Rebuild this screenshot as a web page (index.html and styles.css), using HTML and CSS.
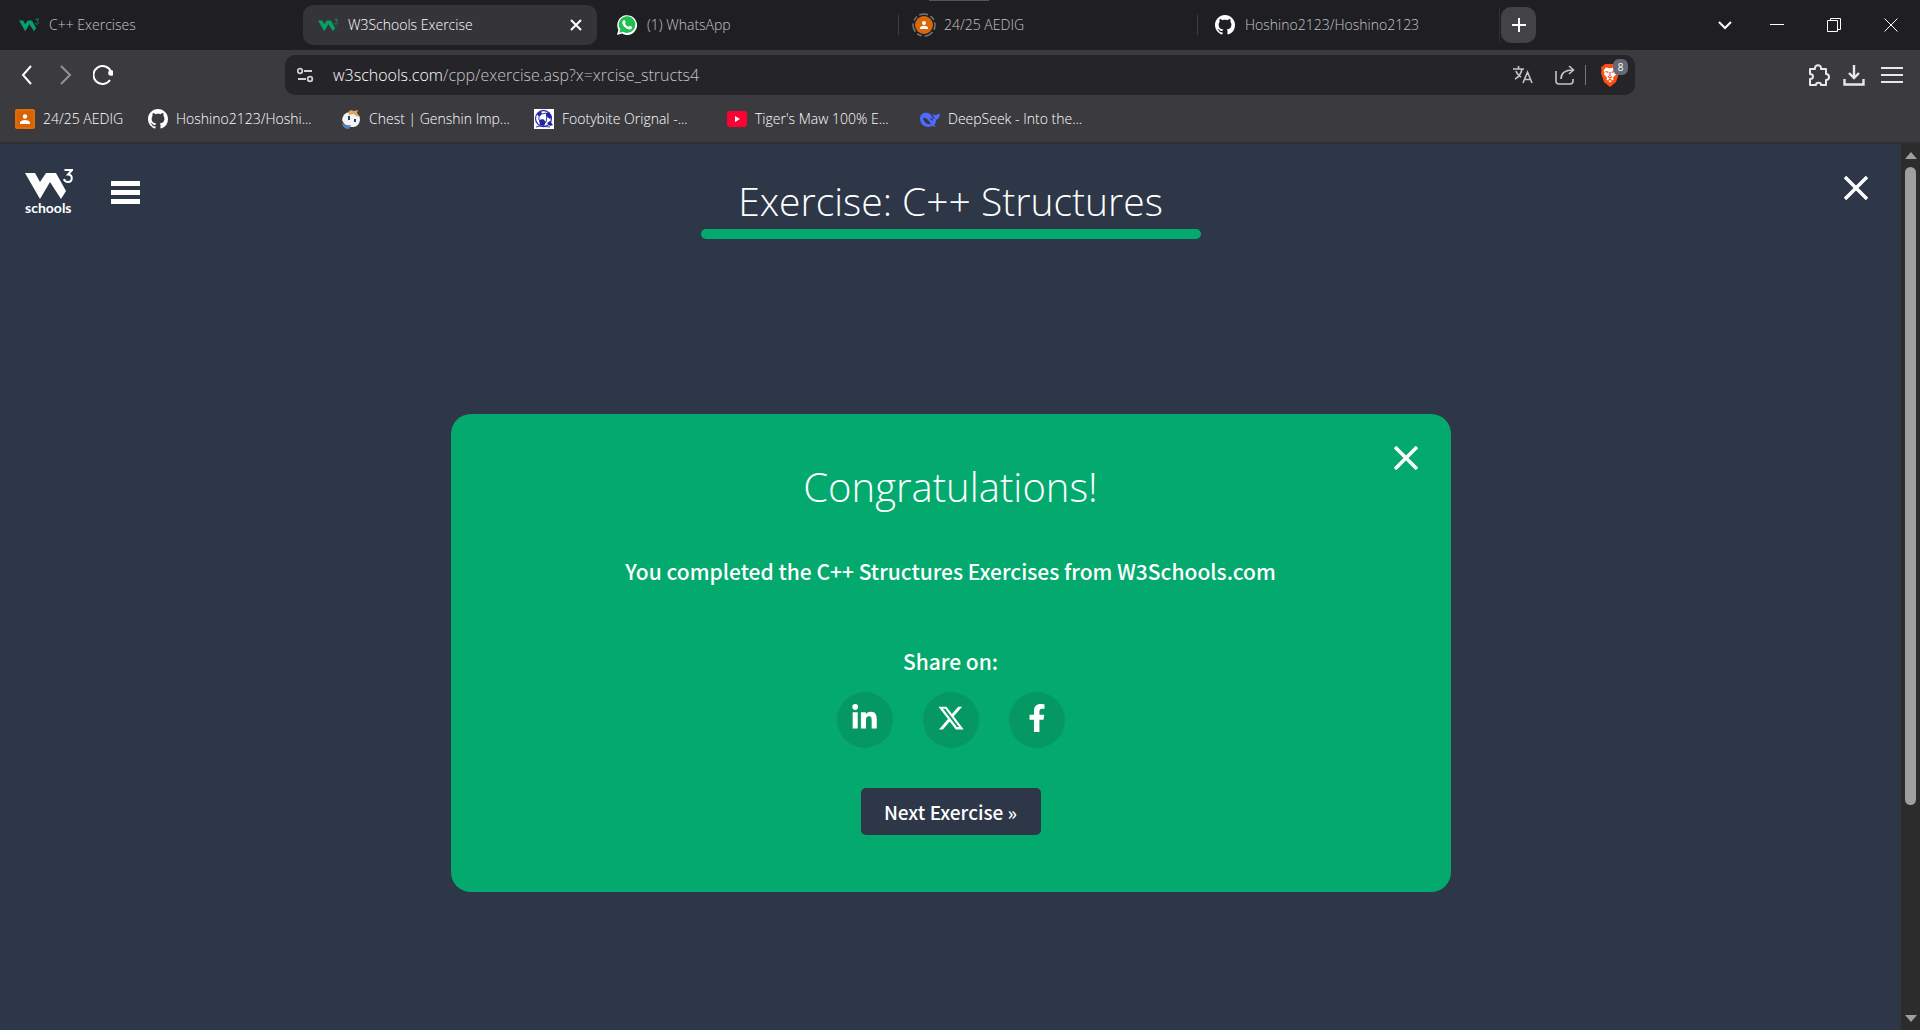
FILE: index.html
```html
<!DOCTYPE html>
<html lang="en">
<head>
<meta charset="utf-8">
<title>W3Schools Exercise</title>
<link rel="stylesheet" href="styles.css">
</head>
<body>
<svg class="sprite" aria-hidden="true">
  <symbol id="w3" viewBox="0 0 48 30"><path d="M0 4h10l5 9 6-9h10l10 18-5 8-11-17-10 17z"/><path class="three" d="M39.500 1h7.500l-4 4.500c5 0 5 7.500 0 7.500-2 0-3.500-1-4-3"/></symbol>
  <symbol id="github" viewBox="0 0 16 16"><path fill="#fff" d="M8 0C3.580 0 0 3.580 0 8c0 3.540 2.290 6.530 5.470 7.590.4.070.55-.17.55-.38 0-.19-.01-.82-.01-1.490-2.010.37-2.530-.49-2.690-.94-.09-.23-.48-.94-.82-1.130-.28-.15-.68-.52-.01-.53.63-.01 1.080.58 1.230.82.72 1.210 1.870.87 2.330.66.070-.52.28-.87.51-1.070-1.780-.2-3.640-.89-3.640-3.950 0-.87.31-1.590.82-2.150-.08-.2-.36-1.020.08-2.120 0 0 .67-.21 2.200.82.64-.18 1.320-.27 2-.27s1.360.09 2 .27c1.530-1.040 2.200-.82 2.200-.82.44 1.100.16 1.920.08 2.120.51.56.82 1.270.82 2.150 0 3.070-1.870 3.750-3.650 3.950.29.25.54.73.54 1.480 0 1.070-.01 1.930-.01 2.200 0 .21.15.46.55.38A8.010 8.010 0 0 0 16 8c0-4.420-3.580-8-8-8z"/></symbol>
  <symbol id="classroom" viewBox="0 0 20 20"><rect width="20" height="20" rx="2" fill="#e06c0a"/><rect x="2" y="2" width="16" height="16" fill="#d96300"/><circle cx="10" cy="7.500" r="2.200" fill="#fff"/><path d="M5 15v-1.500c0-3.500 10-3.500 10 0V15z" fill="#fff"/></symbol>
  <symbol id="cross" viewBox="0 0 24 24"><path d="M1 1l22 22M23 1L1 23" fill="none" stroke="#fff" stroke-width="3.500"/></symbol>
</svg>

<div class="browser">
  <nav class="tabs" aria-label="Tabs">
    <a class="tab" href="#"><svg class="favicon green"><use href="#w3"/></svg><span>C++ Exercises</span></a>
    <div class="tab active"><a href="#"><svg class="favicon green"><use href="#w3"/></svg><span>W3Schools Exercise</span></a>
      <button class="tab-close" aria-label="Close tab"><svg width="12" height="12" viewBox="0 0 12 12"><path d="M1 1l10 10M11 1L1 11" stroke="#fff" stroke-width="2"/></svg></button></div>
    <a class="tab" href="#"><svg class="favicon" viewBox="0 0 20 20"><path d="M0 20l1.400-5.200A9.900 9.900 0 1 1 5 18.600z" fill="#fff"/><path d="M2.300 17.700l.9-3.400a8.300 8.300 0 1 1 2.700 2.500z" fill="#1fbf52"/><path d="M6.800 5.200c.6-.3 1 0 1.200.5l.6 1.500c.1.600-.8 1.100-.6 1.500.8 1.500 2 2.500 3.500 3.100.5.200 1-1.100 1.500-1l1.800.9c.4.300.3 2-.9 2.600-3 1.500-8.900-3.300-8.600-7 .1-.9.800-1.800 1.500-2.100z" fill="#fff"/></svg><span>(1) WhatsApp</span></a>
    <a class="tab split" href="#"><svg class="favicon ring" viewBox="0 0 24 24"><circle cx="12" cy="12" r="11" fill="none" stroke="#77777b" stroke-width="1.500" stroke-dasharray="5 2.500 9 3"/><circle cx="12" cy="12" r="9" fill="#da6806"/><circle cx="12" cy="10" r="2" fill="#fff"/><path d="M8 16v-1c0-3 8-3 8 0v1z" fill="#fff"/></svg><span>24/25 AEDIG</span></a>
    <a class="tab split" href="#"><svg class="favicon"><use href="#github"/></svg><span>Hoshino2123/Hoshino2123</span></a>
    <div class="new-tab-slot"><button class="new-tab" aria-label="New tab"><svg width="14" height="14" viewBox="0 0 14 14"><path d="M7 0v14M0 7h14" stroke="#fff" stroke-width="2"/></svg></button></div>
    <div class="window-buttons">
      <button aria-label="Search tabs"><svg viewBox="0 0 14 14"><path d="M1 4l6 6 6-6" stroke-width="2"/></svg></button>
      <button aria-label="Minimize"><svg viewBox="0 0 14 14"><path d="M0 6.500h14"/></svg></button>
      <button aria-label="Restore"><svg viewBox="0 0 14 14"><path d="M.5 2.500h10v11H.5zM3.500 2V.5h10v11H11"/></svg></button>
      <button aria-label="Close"><svg viewBox="0 0 14 14"><path d="M.5.5l13 13M13.500.5l-13 13"/></svg></button>
    </div>
  </nav>

  <div class="toolbar">
    <div class="nav-buttons">
      <button aria-label="Back"><svg viewBox="0 0 20 20"><path d="M14 1L6 10l8 9"/></svg></button>
      <button class="dim" aria-label="Forward"><svg viewBox="0 0 20 20"><path d="M6 1l9 9-9 9"/></svg></button>
      <button aria-label="Reload"><svg viewBox="0 0 20 20"><path d="M18 7A9 9 0 1 0 17 15"/><circle cx="18" cy="8" r="1.800" fill="#fff"/></svg></button>
    </div>
    <div class="address">
      <svg width="18" height="16" viewBox="0 0 18 16" fill="none" stroke="#d0d0d2" stroke-width="1.800"><circle cx="3" cy="4" r="2.300"/><path d="M7 4h8M1 12h8"/><circle cx="13" cy="12" r="2.300"/></svg>
      <div class="url"><b>w3schools.com</b>/cpp/exercise.asp?x=xrcise_structs4</div>
      <button aria-label="Translate"><svg width="20" height="20" viewBox="0 0 20 20" fill="none" stroke="#c4c4c7" stroke-width="1.600"><path d="M0 4h11M5.500 1v3M2 14c4-2 6-5 7-10M3 6c1 3 3 5 5 6M10 18l4.500-11L19 18M11.500 14.500h6"/></svg></button>
      <button class="share" aria-label="Share"><svg width="20" height="20" viewBox="0 0 20 20" fill="none" stroke="#c4c4c7" stroke-width="1.600"><path d="M1 6v10q0 3 3 3h11q3 0 3-3v-2M6 14c0-6 4-9 12-9M14 1l4.500 4-4.500 4"/></svg></button>
      <button class="shield" aria-label="Brave Shields"><svg width="20" height="24" viewBox="0 0 20 24"><path d="M5 1h10l2 2 2 1-.5 4 .5 2-3 9-6 5-6-5-3-9 .5-2L1 4l2-1z" fill="#fb4f14"/><path d="M6 4.500l4 .8 4-.8 2.500 3-1 2 .5 2-3 3 .5 2-3.500 3-3.500-3 .5-2-3-3 .5-2-1-2z" fill="#fff"/><path d="M5.500 8.500l3 .8M14.500 8.500l-3 .8M10 9v4M8 13.500l2 1.500 2-1.500M8 17.500l2-1 2 1" stroke="#fb4f14" stroke-width="1.200" fill="none"/></svg><span class="badge">8</span></button>
    </div>
    <div class="tools">
      <button aria-label="Extensions"><svg viewBox="0 0 22 22"><path d="M2 5h5c-1-5 7-5 6 0h5v5c4 0 4 6 0 6v5h-5c0-3-5-3-5 0H2v-6c4 0 4-5 0-5z" stroke-linejoin="round"/></svg></button>
      <button aria-label="Downloads"><svg viewBox="0 0 22 22"><path d="M11 1v13M6 9l5 5 5-5M1.500 15v5.500h19V15" stroke-width="2.400"/></svg></button>
      <button class="menu" aria-label="Menu"><svg viewBox="0 0 22 22"><path d="M0 4h22M0 11h22M0 18h22"/></svg></button>
    </div>
  </div>

  <nav class="bookmarks" aria-label="Bookmarks">
    <a class="short" href="#"><svg><use href="#classroom"/></svg><span>24/25 AEDIG</span></a>
    <a href="#"><svg><use href="#github"/></svg><span>Hoshino2123/Hoshi...</span></a>
    <a href="#"><svg viewBox="0 0 20 20"><path d="M1 11Q2 4 8 3q11 0 11 8-1 6-6 7-9 1-12-7z" fill="#f4f4f6"/><path d="M7 3l3-2 3 1 4-1-1 3 3 4-4-1-2-2-5 1z" fill="#dda46a"/><path d="M1 14q5 3 9 2l-2 4q-6 0-7-6z" fill="#4f86b5"/><path d="M8 7v4M14 10v3" stroke="#29405e" stroke-width="2"/></svg><span>Chest | Genshin Imp...</span></a>
    <a href="#"><svg viewBox="0 0 20 20"><path fill="#fff" d="M0 0h20v20H0z"/><circle cx="9.500" cy="9.500" r="8" fill="#fff" stroke="#3535a8" stroke-width="1.300"/><path d="M3 5l4-3 1 3-3 3zM12 4l3-1 3 5-2 2-4-3zM5 11l4-1 3 3-2 4-4-1zM13 14l3-2 3 4-3 1z" fill="#2323a8"/><path d="M8 5l4-1M5 8v3M12 13l1-6M2 18l4-1 10 1" fill="none" stroke="#3535a8"/></svg><span>Footybite Orignal -...</span></a>
    <a href="#"><svg viewBox="0 0 20 20"><rect y="2" width="20" height="16" rx="3" fill="#ff0033"/><path d="M8 7l5 3-5 3z" fill="#fff"/></svg><span>Tiger's Maw 100% E...</span></a>
    <a href="#"><svg viewBox="0 0 20 20"><path d="M0 9C1 3 7 3 10 5c2 2 3 5 5 5l-3-5c3 2 6 1 7-1 2 4-1 6-3 7 0 4-2 5-2 5l2 2-4-1C6 20 0 16 0 9z" fill="#4d6bfe"/><path d="M3 9c3-1 6 3 8 6-4 1-7-2-8-6zM10 9q3 0 3 3-2 0-3-3" fill="#39383c"/></svg><span>DeepSeek - Into the...</span></a>
  </nav>
</div>

<div class="viewport">
  <main class="page">
    <header class="page-head">
      <div class="brand">
        <a class="logo" href="#"><svg width="48" height="30"><use href="#w3"/></svg><span>schools</span></a>
        <button class="burger" aria-label="Menu"><i></i><i></i><i></i></button>
      </div>
      <div class="title"><h1>Exercise: C++ Structures</h1><div class="progress"></div></div>
      <button class="close" aria-label="Close"><svg width="24" height="24"><use href="#cross"/></svg></button>
    </header>

    <section class="card">
      <button class="card-close" aria-label="Close"><svg width="24" height="24"><use href="#cross"/></svg></button>
      <h2>Congratulations!</h2>
      <p class="done">You completed the C++ Structures Exercises from W3Schools.com</p>
      <p class="share-on">Share on:</p>
      <div class="socials">
        <a href="#" aria-label="LinkedIn"><svg width="25" height="28" viewBox="0 0 448 512"><path d="M100.280 448H7.400V148.900h92.880zM53.790 108.100C24.090 108.100 0 83.500 0 53.800a53.790 53.790 0 0 1 107.580 0c0 29.700-24.100 54.300-53.790 54.300zM447.900 448h-92.680V302.400c0-34.700-.7-79.200-48.290-79.200-48.290 0-55.690 37.700-55.690 76.700V448h-92.780V148.900h89.080v40.800h1.300c12.400-23.500 42.690-48.300 87.880-48.300 94 0 111.280 61.900 111.280 142.300V448z"/></svg></a>
        <a href="#" aria-label="X"><svg width="28" height="28" viewBox="0 0 512 512"><path d="M389.200 48h70.600L305.600 224.200 487 464H345L233.700 318.600 106.500 464H35.800L200.700 275.500 26.800 48H172.400L272.900 180.900 389.200 48zM364.400 421.800h39.100L151.100 88h-42L364.400 421.800z"/></svg></a>
        <a href="#" aria-label="Facebook"><svg width="18" height="28" viewBox="0 0 320 512"><path d="M279.140 288l14.220-92.660h-88.910v-60.130c0-25.350 12.420-50.060 52.240-50.060h40.420V6.260S260.430 0 225.360 0c-73.220 0-121.080 44.380-121.080 124.720v70.620H22.890V288h81.390v224h100.170V288z"/></svg></a>
      </div>
      <button class="next">Next Exercise »</button>
    </section>
  </main>
  <div class="scrollbar" aria-hidden="true"><i class="up"></i><div class="track"><div class="thumb"></div></div><i class="down"></i></div>
</div>
</body>
</html>
```
FILE: styles.css
```css
* { box-sizing: border-box; }
body {
  margin: 0;
  min-height: 100vh;
  display: flex;
  flex-direction: column;
  background: #2d3748;
  color: #fff;
  font-family: "Open Sans", "Noto Sans", sans-serif;
}
button { margin: 0; padding: 0; border: 0; background: none; color: inherit; font: inherit; display: grid; place-items: center; }
a { color: inherit; text-decoration: none; }
h1, h2, p { margin: 0; font-weight: 300; }
svg { display: block; flex: none; }
.sprite { position: absolute; width: 0; height: 0; }
.three { fill: none; stroke: currentColor; stroke-width: 2; }
#w3 { fill: currentColor; }

/* Browser frame */
.browser { background: #3b3a3e; border-bottom: 2px solid #303034; font-size: 14px; font-weight: 300; }
.tabs { height: 50px; padding-left: 4px; display: flex; align-items: center; gap: 5px; background: #1f1f23; position: relative; }
.tabs::before { content: ""; position: absolute; left: 929px; top: 0; width: 60px; height: 1px; background: #555558; }
.tab { flex: 0 1 294px; height: 40px; padding: 0 15px; display: flex; align-items: center; gap: 10px; color: #c4c4c7; white-space: nowrap; position: relative; border-radius: 10px; }
.tab a { display: flex; align-items: center; gap: 10px; flex: 1; }
.tab.active { background: #353438; color: #fff; }
.tab.split::before { content: ""; position: absolute; left: -3px; top: 10px; width: 1px; height: 20px; background: #3f3f43; }
.tab span, .bookmarks span { padding-bottom: 2px; }
.favicon { width: 20px; height: 20px; }
.green { color: #06a069; }
.ring { width: 24px; height: 24px; margin: 0 -2px 0 -4px; }
.new-tab-slot { padding-left: 1px; border-left: 1px solid #2f2f33; }
.new-tab { width: 35px; height: 36px; border-radius: 10px; background: #434346; }
.window-buttons { margin-left: auto; padding-right: 22px; display: flex; gap: 43px; }
.window-buttons svg { width: 14px; height: 14px; fill: none; stroke: #fff; }
.window-buttons button:first-child { margin-right: -5px; }

.toolbar { height: 50px; padding: 0 17px; display: flex; align-items: center; }
.nav-buttons { display: flex; gap: 18px; width: 268px; }
.nav-buttons svg { width: 20px; height: 20px; fill: none; stroke: #fff; stroke-width: 2; }
.dim { opacity: .45; }
.address { flex: 0 1 1350px; height: 40px; padding: 0 7px 0 12px; display: flex; align-items: center; border-radius: 10px; background: #252429; }
.url { flex: 1; padding-left: 18px; font-size: 16px; color: #c4c4c7; }
.url b { font-weight: 300; color: #fff; }
.share { margin-left: 22px; padding-right: 10px; border-right: 1px solid #77777b; }
.shield { margin-left: 14px; padding-right: 8px; position: relative; }
.badge { position: absolute; right: 0; top: -4px; width: 15px; height: 16px; border-radius: 6px; background: #666875; font-size: 10px; line-height: 16px; font-weight: 400; }
.tools { margin-left: auto; display: flex; gap: 13px; }
.tools .menu { margin-left: 3px; }
.tools svg { width: 22px; height: 22px; fill: none; stroke: #e8e8ea; stroke-width: 2; }

.bookmarks { height: 42px; padding: 0 15px 4px; display: flex; align-items: center; gap: 21px; }
.bookmarks a { flex: 0 1 172px; display: flex; align-items: center; gap: 8px; white-space: nowrap; }
.bookmarks .short { flex-basis: 112px; }
.bookmarks svg { width: 20px; height: 20px; }

/* Page */
.viewport { flex: 1; display: flex; }
.page { flex: 1; display: flex; flex-direction: column; align-items: center; }
.page-head { width: 100%; padding: 25px 25px 0; display: grid; grid-template-columns: 1fr 500px 1fr; align-items: start; }
.brand { display: flex; gap: 38px; }
.logo { font-family: Lato, sans-serif; font-size: 14px; font-weight: 700; line-height: 18px; }
.burger { display: flex; flex-direction: column; gap: 4px; padding-top: 12px; }
.burger i { width: 29px; height: 5px; background: #fff; }
.title { text-align: center; padding-top: 4px; }
h1, h2 { font-size: 40px; line-height: 56px; white-space: nowrap; }
h1 { font-size: 39px; }
.progress { height: 10px; border-radius: 5px; background: #04aa6d; }
.close { justify-self: end; padding: 7px 8px 0 0; }
.card { position: relative; width: 100%; max-width: 1000px; margin: 175px 0 40px; padding: 45px 32px 57px; border-radius: 20px; background: #04aa6d; display: flex; flex-direction: column; align-items: center; font-family: "Noto Sans CJK SC", sans-serif; }
.card-close { position: absolute; top: 32px; right: 33px; }
.card h2 { font-family: "Open Sans", sans-serif; }
.done, .share-on { font-size: 21px; line-height: 32px; font-weight: 500; }
.done { margin-top: 40px; }
.share-on { margin-top: 58px; }
.socials { display: flex; gap: 30px; margin-top: 15px; }
.socials a { width: 56px; height: 56px; padding-bottom: 4px; border-radius: 50%; background: #059862; display: grid; place-items: center; }
.socials svg { fill: #fff; }
.next { margin-top: 40px; width: 180px; height: 47px; border-radius: 5px; background: #2d3748; font-size: 19px; font-weight: 500; }

.scrollbar { width: 19px; padding: 8px 4px; display: flex; flex-direction: column; align-items: center; background: #2c2c2c; }
.track { flex: 1; width: 11px; padding: 8px 0; }
.thumb { height: 76%; border-radius: 6px; background: #9f9f9f; }
.up, .down { border: 6px solid transparent; }
.up { border-top: 0; border-bottom: 7px solid #9f9f9f; }
.down { border-bottom: 0; border-top: 7px solid #9f9f9f; }
```
